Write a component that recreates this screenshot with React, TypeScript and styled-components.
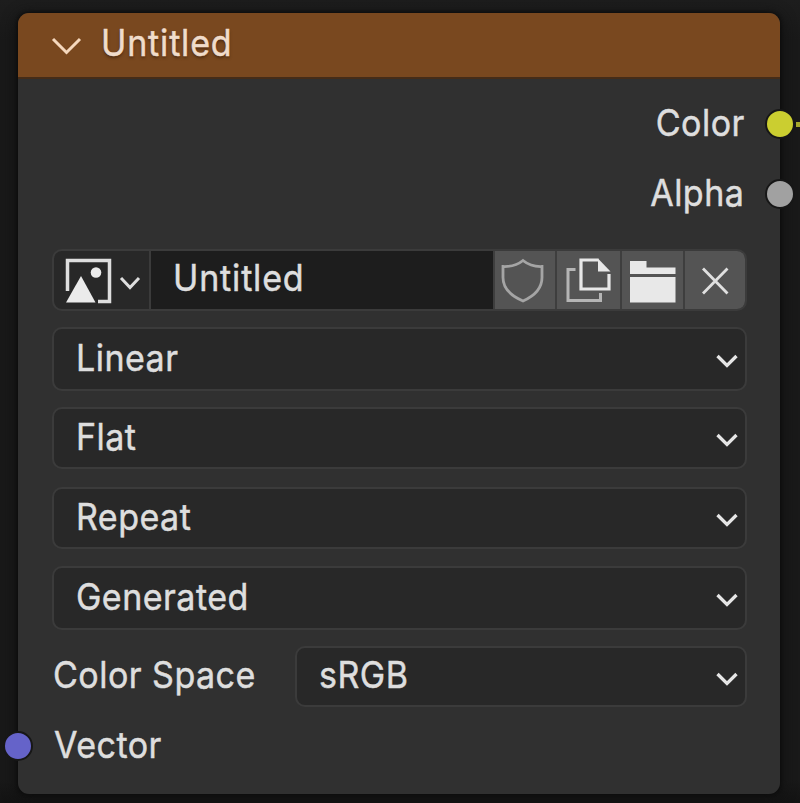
import React from "react";
import styled, { createGlobalStyle } from "styled-components";

const GlobalStyle = createGlobalStyle`
  * { box-sizing: border-box; }
  html, body { margin: 0; background: #1a1a1a; }
  body { overflow: hidden; }
`;

const Canvas = styled.main`
  width: 800px;
  height: 803px;
  padding: 13px 20px 9px 18px;
  background: linear-gradient(#1d1d1d, #191919 40px, #191919 780px, #131313);
  font-family: Inter, "Liberation Sans", sans-serif;
  font-size: 37px;
  line-height: 40px;
  color: #dedede;
  overflow: hidden;
`;

const Node = styled.section`
  display: flex;
  flex-direction: column;
  height: 781px;
  border-radius: 11px;
  background: #303030;
  box-shadow: 0 0 3px 1px #0d0d0d, 0 3px 14px 2px #101010;
`;

const Header = styled.header`
  display: flex;
  align-items: flex-start;
  height: 66px;
  padding: 10px 33px 0;
  border-radius: 11px 11px 0 0;
  border-bottom: 2px solid #452c18;
  background: #79481f;
  color: #f0dccb;
  text-shadow: 0 2px 3px #4c2c12;
`;

const HeaderArrow = styled.svg`
  width: 32px;
  height: 24px;
  margin: 11px 18px 0 0;
`;

const Text = styled.span<{ $end?: boolean; $tracking?: number }>`
  display: inline-block;
  white-space: nowrap;
  letter-spacing: ${(p) => p.$tracking ?? 0.5}px;
  margin-right: -${(p) => p.$tracking ?? 0.5}px;
  -webkit-text-stroke: 0.5px currentColor;
  transform: scaleX(0.92);
  transform-origin: ${(p) => (p.$end ? "right" : "left")} center;
`;

const Socket = styled.i<{ $color: string; $side: "left" | "right" }>`
  position: absolute;
  top: 50%;
  ${(p) => p.$side}: -15px;
  width: 30px;
  height: 30px;
  margin-top: -15px;
  border: 2px solid #171717;
  border-radius: 50%;
  background: ${(p) => p.$color};
`;

const Link = styled.i`
  position: absolute;
  top: 50%;
  right: -22px;
  width: 6px;
  height: 5px;
  margin-top: -2px;
  background: #a6a92c;
`;

const SocketRow = styled.div<{ $output?: boolean }>`
  position: relative;
  display: flex;
  align-items: center;
  justify-content: ${(p) => (p.$output ? "flex-end" : "flex-start")};
  height: 70px;
  padding: 0 36px 2px;
`;

const Outputs = styled.div`
  padding-top: 10px;
`;

const Inputs = styled.div`
  padding-top: 4px;
`;

const Fields = styled.div`
  display: flex;
  flex-direction: column;
  padding: 20px 33px 0 34px;
`;

const ImageField = styled.div`
  display: flex;
  height: 62px;
  border: 2px solid #3b3b3b;
  border-radius: 10px;
  background: #282828;
  overflow: hidden;
`;

const ImagePicker = styled.div`
  display: flex;
  width: 97px;
  padding: 1px 0 0 8px;
  border-right: 2px solid #3b3b3b;
`;

const ImageName = styled.div`
  flex: 1;
  padding: 7px 0 0 22px;
  background: #1d1d1d;
`;

const Action = styled.div<{ $width: number }>`
  display: flex;
  align-items: center;
  justify-content: center;
  width: ${(p) => p.$width}px;
  height: 60px;
  margin-top: -1px;
  border-left: 2px solid #3e3e3e;
  background: #545454;
`;

const Icon = styled.svg<{ $w?: number; $h?: number }>`
  flex: none;
  width: ${(p) => p.$w ?? 60}px;
  height: ${(p) => p.$h ?? 60}px;
`;

const Select = styled.div<{ $height: number; $gap: number }>`
  display: flex;
  align-items: center;
  justify-content: space-between;
  flex: 1 0 auto;
  height: ${(p) => p.$height}px;
  margin-top: ${(p) => p.$gap}px;
  padding: 0 6.5px 0 22px;
  border: 2px solid #3b3b3b;
  border-radius: 10px;
  background: #282828;
`;

const SelectText = styled.div`
  padding-bottom: 3px;
`;

const SpaceRow = styled.div`
  display: flex;
  align-items: center;
  margin-top: 16px;
`;

const SpaceLabel = styled.div`
  width: 243px;
  padding: 0 0 3px 1px;
`;

function Chevron() {
  return (
    <Icon $w={24} $h={18} viewBox="0 0 24 18">
      <path d="M2.5 6 L12 15.5 L21.5 6" fill="none" stroke="#e6e6e6" strokeWidth="3.3" />
    </Icon>
  );
}

interface Option {
  label: string;
  height: number;
  gap: number;
}

const OPTIONS: Option[] = [
  { label: "Linear", height: 64, gap: 16 },
  { label: "Flat", height: 62, gap: 16 },
  { label: "Repeat", height: 62, gap: 18 },
  { label: "Generated", height: 64, gap: 17 },
];

function Dropdown({ label, height, gap }: Option) {
  return (
    <Select $height={height} $gap={gap}>
      <SelectText>
        <Text>{label}</Text>
      </SelectText>
      <Chevron />
    </Select>
  );
}

export default function App() {
  return (
    <>
      <GlobalStyle />
      <Canvas>
        <Node>
          <Header>
            <HeaderArrow viewBox="0 0 32 24">
              <path d="M2 5 L15.5 18.5 L29 5" fill="none" stroke="#f5d8bd" strokeWidth="3" />
            </HeaderArrow>
            <Text $tracking={0.9}>Untitled</Text>
          </Header>
          <Outputs>
            <SocketRow $output>
              <Text $end>Color</Text>
              <Link />
              <Socket $side="right" $color="#cbce30" />
            </SocketRow>
            <SocketRow $output>
              <Text $end>Alpha</Text>
              <Socket $side="right" $color="#a1a1a1" />
            </SocketRow>
          </Outputs>
          <Fields>
            <ImageField>
              <ImagePicker>
                <Icon $w={54} $h={58} viewBox="62 252 54 58">
                  <path d="M67.5 291 V260.5 H109.5 V301.5 H98" fill="none" stroke="#dedede" strokeWidth="3.5" />
                  <path d="M66 302.5 L81 276 L95.5 302.5 Z" fill="#ebebeb" />
                  <circle cx="96" cy="272.5" r="5.3" fill="#ebebeb" />
                </Icon>
                <Icon $w={28} $h={58} viewBox="116 252 28 58">
                  <path d="M121 278 L130 287.5 L139 278" fill="none" stroke="#dedede" strokeWidth="3" />
                </Icon>
              </ImagePicker>
              <ImageName>
                <Text $tracking={0.9}>Untitled</Text>
              </ImageName>
              <Action $width={62}>
                <Icon viewBox="495 249.5 60 60">
                  <path
                    d="M523 260 Q515 266.5 503 266 V277 Q503 292 523 300.5 Q542 292 542 277 V266 Q531 266.5 523 260 Z"
                    fill="none"
                    stroke="#a5a5a5"
                    strokeWidth="2.8"
                  />
                </Icon>
              </Action>
              <Action $width={65}>
                <Icon viewBox="558.5 250 60 60">
                  <path d="M575 269.5 H567.5 V300.5 H600 V293" fill="none" stroke="#b5b5b5" strokeWidth="3" />
                  <path d="M598 260 H580.5 V289 H608.5 V274" fill="none" stroke="#e8e8e8" strokeWidth="3.2" />
                  <path d="M597.5 258.5 L610 271.5 H597.5 Z" fill="#e8e8e8" />
                </Icon>
              </Action>
              <Action $width={63}>
                <Icon viewBox="622.5 250 60 60">
                  <path d="M629.5 261 H646 V267.5 H675 V274 H629.5 Z M629.5 277 H675 V302.5 H629.5 Z" fill="#e8e8e8" />
                </Icon>
              </Action>
              <Action $width={62}>
                <Icon viewBox="685 250 60 60">
                  <path d="M703 268.5 L727.5 293.5 M727.5 268.5 L703 293.5" fill="none" stroke="#e0e0e0" strokeWidth="2.8" />
                </Icon>
              </Action>
            </ImageField>
            {OPTIONS.map((option) => (
              <Dropdown key={option.label} {...option} />
            ))}
            <SpaceRow>
              <SpaceLabel>
                <Text>Color Space</Text>
              </SpaceLabel>
              <Dropdown label="sRGB" height={61} gap={0} />
            </SpaceRow>
          </Fields>
          <Inputs>
            <SocketRow>
              <Text>Vector</Text>
              <Socket $side="left" $color="#6563c9" />
            </SocketRow>
          </Inputs>
        </Node>
      </Canvas>
    </>
  );
}
